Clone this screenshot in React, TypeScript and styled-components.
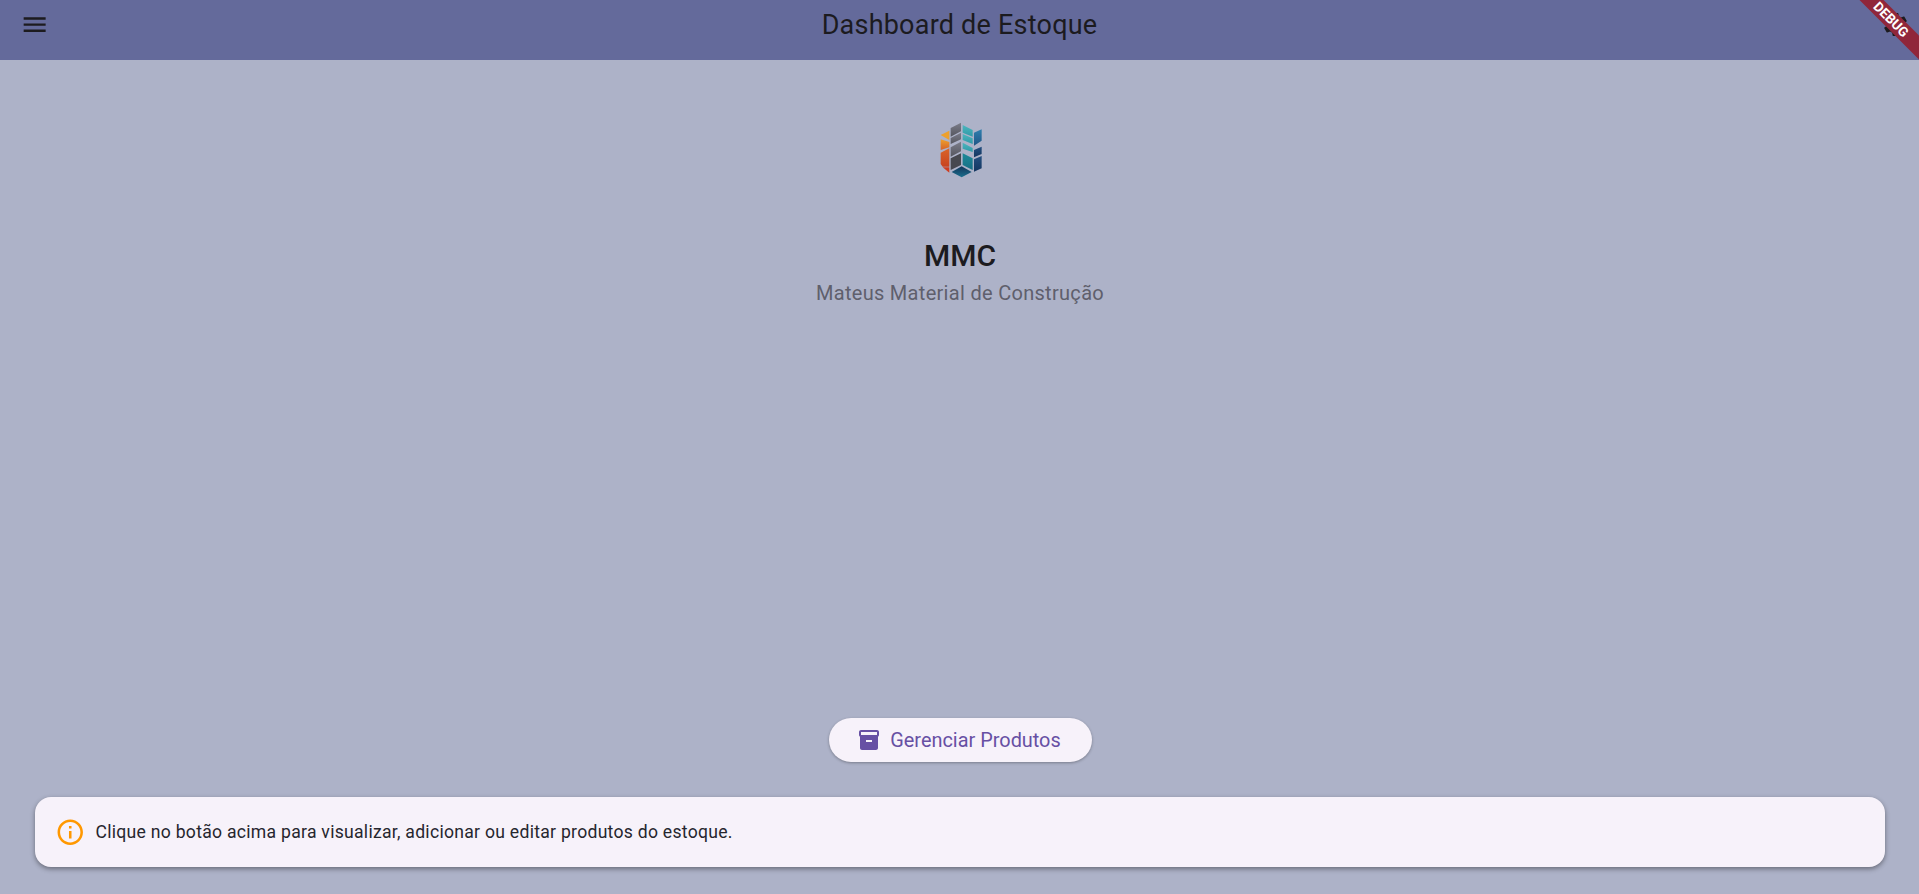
import React from 'react';
import styled, { createGlobalStyle } from 'styled-components';

const GlobalStyle = createGlobalStyle`
  html, body {
    margin: 0;
    padding: 0;
    height: 100%;
    overflow: hidden;
    background: #adb2c8;
    font-family: Roboto, "Liberation Sans", sans-serif;
  }
  #root {
    height: 100%;
  }
`;

function MenuIcon() {
  return (
    <svg width="29.3" height="29.3" viewBox="0 0 24 24" fill="#1c1b1f">
      <path d="M3 18h18v-2H3v2zm0-5h18v-2H3v2zm0-7v2h18V6H3z" />
    </svg>
  );
}

function SettingsIcon() {
  return (
    <svg width="29" height="29" viewBox="0 0 24 24" fill="#1c1b1f">
      <path d="M19.14 12.94c.04-.3.06-.61.06-.94 0-.32-.02-.64-.07-.94l2.03-1.58c.18-.14.23-.41.12-.61l-1.92-3.32c-.12-.22-.37-.29-.59-.22l-2.39.96c-.5-.38-1.03-.7-1.62-.94l-.36-2.54c-.04-.24-.24-.41-.48-.41h-3.84c-.24 0-.43.17-.47.41l-.36 2.54c-.59.24-1.13.57-1.62.94l-2.39-.96c-.22-.08-.47 0-.59.22L2.74 8.87c-.12.21-.08.47.12.61l2.03 1.58c-.05.3-.09.63-.09.94s.02.64.07.94l-2.03 1.58c-.18.14-.23.41-.12.61l1.92 3.32c.12.22.37.29.59.22l2.39-.96c.5.38 1.03.7 1.62.94l.36 2.54c.05.24.24.41.48.41h3.84c.24 0 .44-.17.47-.41l.36-2.54c.59-.24 1.13-.56 1.62-.94l2.39.96c.22.08.47 0 .59-.22l1.92-3.32c.12-.22.07-.47-.12-.61l-2.01-1.58zM12 15.6c-1.98 0-3.6-1.62-3.6-3.6s1.62-3.6 3.6-3.6 3.6 1.62 3.6 3.6-1.62 3.6-3.6 3.6z" />
    </svg>
  );
}

function InventoryIcon() {
  return (
    <svg width="24" height="24" viewBox="0 0 24 24" fill="#6750a4">
      <path d="M20 2H4c-1 0-2 .9-2 2v3.01c0 .72.43 1.34 1 1.69V20c0 1.1 1.1 2 2 2h14c.9 0 2-.9 2-2V8.7c.57-.35 1-.97 1-1.69V4c0-1.1-1-2-2-2zm-5 12H9v-2h6v2zm5-7H4V4l16-.02V7z" />
    </svg>
  );
}

function InfoIcon() {
  return (
    <svg width="30.5" height="30.5" viewBox="0 0 24 24" fill="#ff9800">
      <path d="M11 7h2v2h-2zm0 4h2v6h-2zm1-9C6.48 2 2 6.48 2 12s4.48 10 10 10 10-4.48 10-10S17.52 2 12 2zm0 18c-4.41 0-8-3.59-8-8s3.59-8 8-8 8 3.59 8 8-3.59 8-8 8z" />
    </svg>
  );
}

function Logo() {
  return (
    <svg width="42.67" height="56" viewBox="120 66 128 168">
      <defs>
        <linearGradient id="orange" x1="0" y1="0" x2="0" y2="1">
          <stop offset="0" stopColor="#eea02b" />
          <stop offset="1" stopColor="#d4622a" />
        </linearGradient>
        <linearGradient id="orangeLow" x1="0" y1="0" x2="0" y2="1">
          <stop offset="0" stopColor="#d9652a" />
          <stop offset="1" stopColor="#c8431f" />
        </linearGradient>
        <linearGradient id="grey" x1="0" y1="0" x2="0" y2="1">
          <stop offset="0" stopColor="#7c7d8a" />
          <stop offset="1" stopColor="#55565f" />
        </linearGradient>
        <linearGradient id="teal" x1="0" y1="0" x2="0" y2="1">
          <stop offset="0" stopColor="#4db5bd" />
          <stop offset="1" stopColor="#2f9aa8" />
        </linearGradient>
        <linearGradient id="tealLow" x1="0" y1="0" x2="0" y2="1">
          <stop offset="0" stopColor="#1d8a98" />
          <stop offset="1" stopColor="#186f86" />
        </linearGradient>
        <linearGradient id="blue" x1="0" y1="0" x2="0" y2="1">
          <stop offset="0" stopColor="#2f7fae" />
          <stop offset="1" stopColor="#1f5586" />
        </linearGradient>
        <linearGradient id="navy" x1="0" y1="0" x2="0" y2="1">
          <stop offset="0" stopColor="#234f80" />
          <stop offset="1" stopColor="#143660" />
        </linearGradient>
        <linearGradient id="gem" x1="0" y1="0" x2="0" y2="1">
          <stop offset="0" stopColor="#14355a" />
          <stop offset="1" stopColor="#1a6f8e" />
        </linearGradient>
      </defs>
      <polygon points="122,105 148,92 148,120" fill="#eda02c" />
      <polygon points="122,118 148,126 148,142 122,150" fill="url(#orange)" />
      <polygon points="122,158 148,145 148,200 128,200 122,192" fill="url(#orangeLow)" />
      <polygon points="128,202 148,202 148,218" fill="#cf3d20" />
      <polygon points="152,84 183,68 183,94 152,110" fill="url(#grey)" />
      <polygon points="152,114 183,98 183,118 152,132" fill="url(#grey)" />
      <polygon points="152,142 183,125 183,154 152,170" fill="url(#grey)" />
      <polygon points="152,175 183,160 183,195 152,210" fill="#47484f" />
      <polygon points="188,75 218,90 218,110 188,98" fill="url(#teal)" />
      <polygon points="188,102 218,115 218,132 188,120" fill="url(#teal)" />
      <polygon points="188,128 218,144 218,156 188,146" fill="url(#teal)" />
      <polygon points="188,160 218,175 218,210 188,195" fill="url(#tealLow)" />
      <polygon points="222,98 245,88 245,122 222,137" fill="url(#blue)" />
      <polygon points="222,150 245,140 245,162 222,172" fill="url(#navy)" />
      <polygon points="222,178 245,168 245,205 222,215" fill="url(#navy)" />
      <polygon points="155,216 185,199 215,216 185,232" fill="url(#gem)" />
    </svg>
  );
}

export default function App() {
  return (
    <Page>
      <GlobalStyle />
      <AppBar>
        <MenuButton>
          <MenuIcon />
        </MenuButton>
        <Title>Dashboard de Estoque</Title>
        <ActionButton>
          <SettingsIcon />
        </ActionButton>
      </AppBar>
      <Body>
        <Brand>
          <LogoSlot>
            <Logo />
          </LogoSlot>
          <BrandName>MMC</BrandName>
          <BrandSub>Mateus Material de Construção</BrandSub>
        </Brand>
        <Actions>
          <ManageButton>
            <InventoryIcon />
            Gerenciar Produtos
          </ManageButton>
        </Actions>
        <InfoCard>
          <InfoIcon />
          <InfoText>Clique no botão acima para visualizar, adicionar ou editar produtos do estoque.</InfoText>
        </InfoCard>
      </Body>
      <DebugBanner>DEBUG</DebugBanner>
    </Page>
  );
}

const Page = styled.div`
  position: relative;
  display: flex;
  flex-direction: column;
  height: 100%;
  overflow: hidden;
  background: #adb2c8;
`;

const AppBar = styled.header`
  position: relative;
  flex: none;
  height: 60px;
  background: #646a9b;
  display: flex;
  justify-content: center;
  box-sizing: border-box;
  padding-top: 9px;
`;

const MenuButton = styled.div`
  position: absolute;
  left: 20px;
  top: 10px;
  display: flex;
`;

const ActionButton = styled.div`
  position: absolute;
  right: 9px;
  top: 10px;
  display: flex;
`;

const Title = styled.h1`
  margin: 0;
  font-size: 27px;
  line-height: 32px;
  letter-spacing: 0.22px;
  font-weight: 400;
  color: #1c1b1f;
`;

const Body = styled.main`
  flex: 1;
  display: flex;
  flex-direction: column;
  padding: 0 34px 27px 35px;
`;

const Brand = styled.section`
  flex: 1;
  display: flex;
  flex-direction: column;
  align-items: center;
`;

const LogoSlot = styled.div`
  margin-top: 62px;
  padding-left: 2px;
  height: 56px;
  display: flex;
`;

const BrandName = styled.h2`
  margin: 59px 0 0;
  font-size: 30px;
  line-height: 38px;
  font-weight: 500;
  color: #1c1b1f;
`;

const BrandSub = styled.p`
  margin: 4px 0 0;
  font-size: 20px;
  line-height: 28px;
  font-weight: 400;
  letter-spacing: 0.3px;
  color: #5f5f6c;
`;

const Actions = styled.div`
  display: flex;
  justify-content: center;
  margin-bottom: 35px;
`;

const ManageButton = styled.button`
  display: flex;
  align-items: center;
  gap: 9px;
  height: 44px;
  width: 263px;
  padding: 0 2px 0 0;
  justify-content: center;
  border: none;
  border-radius: 22px;
  background: #f7f2fa;
  color: #6750a4;
  font-family: inherit;
  font-size: 19.9px;
  box-shadow: 0 1px 3px rgba(0, 0, 0, 0.3);
`;

const InfoCard = styled.section`
  display: flex;
  align-items: center;
  gap: 10px;
  height: 70px;
  box-sizing: border-box;
  padding: 0 20px;
  border-radius: 16px;
  background: #f7f2fa;
  box-shadow: 0 2px 5px rgba(0, 0, 0, 0.4);
`;

const InfoText = styled.span`
  font-size: 17.6px;
  letter-spacing: 0.27px;
  color: #26262e;
`;

const DebugBanner = styled.div`
  position: absolute;
  top: 10.5px;
  right: -31.5px;
  width: 120px;
  height: 17px;
  background: #90263a;
  color: #fff;
  font-size: 13.5px;
  font-weight: 700;
  line-height: 17px;
  text-align: center;
  transform: rotate(45deg);
`;
